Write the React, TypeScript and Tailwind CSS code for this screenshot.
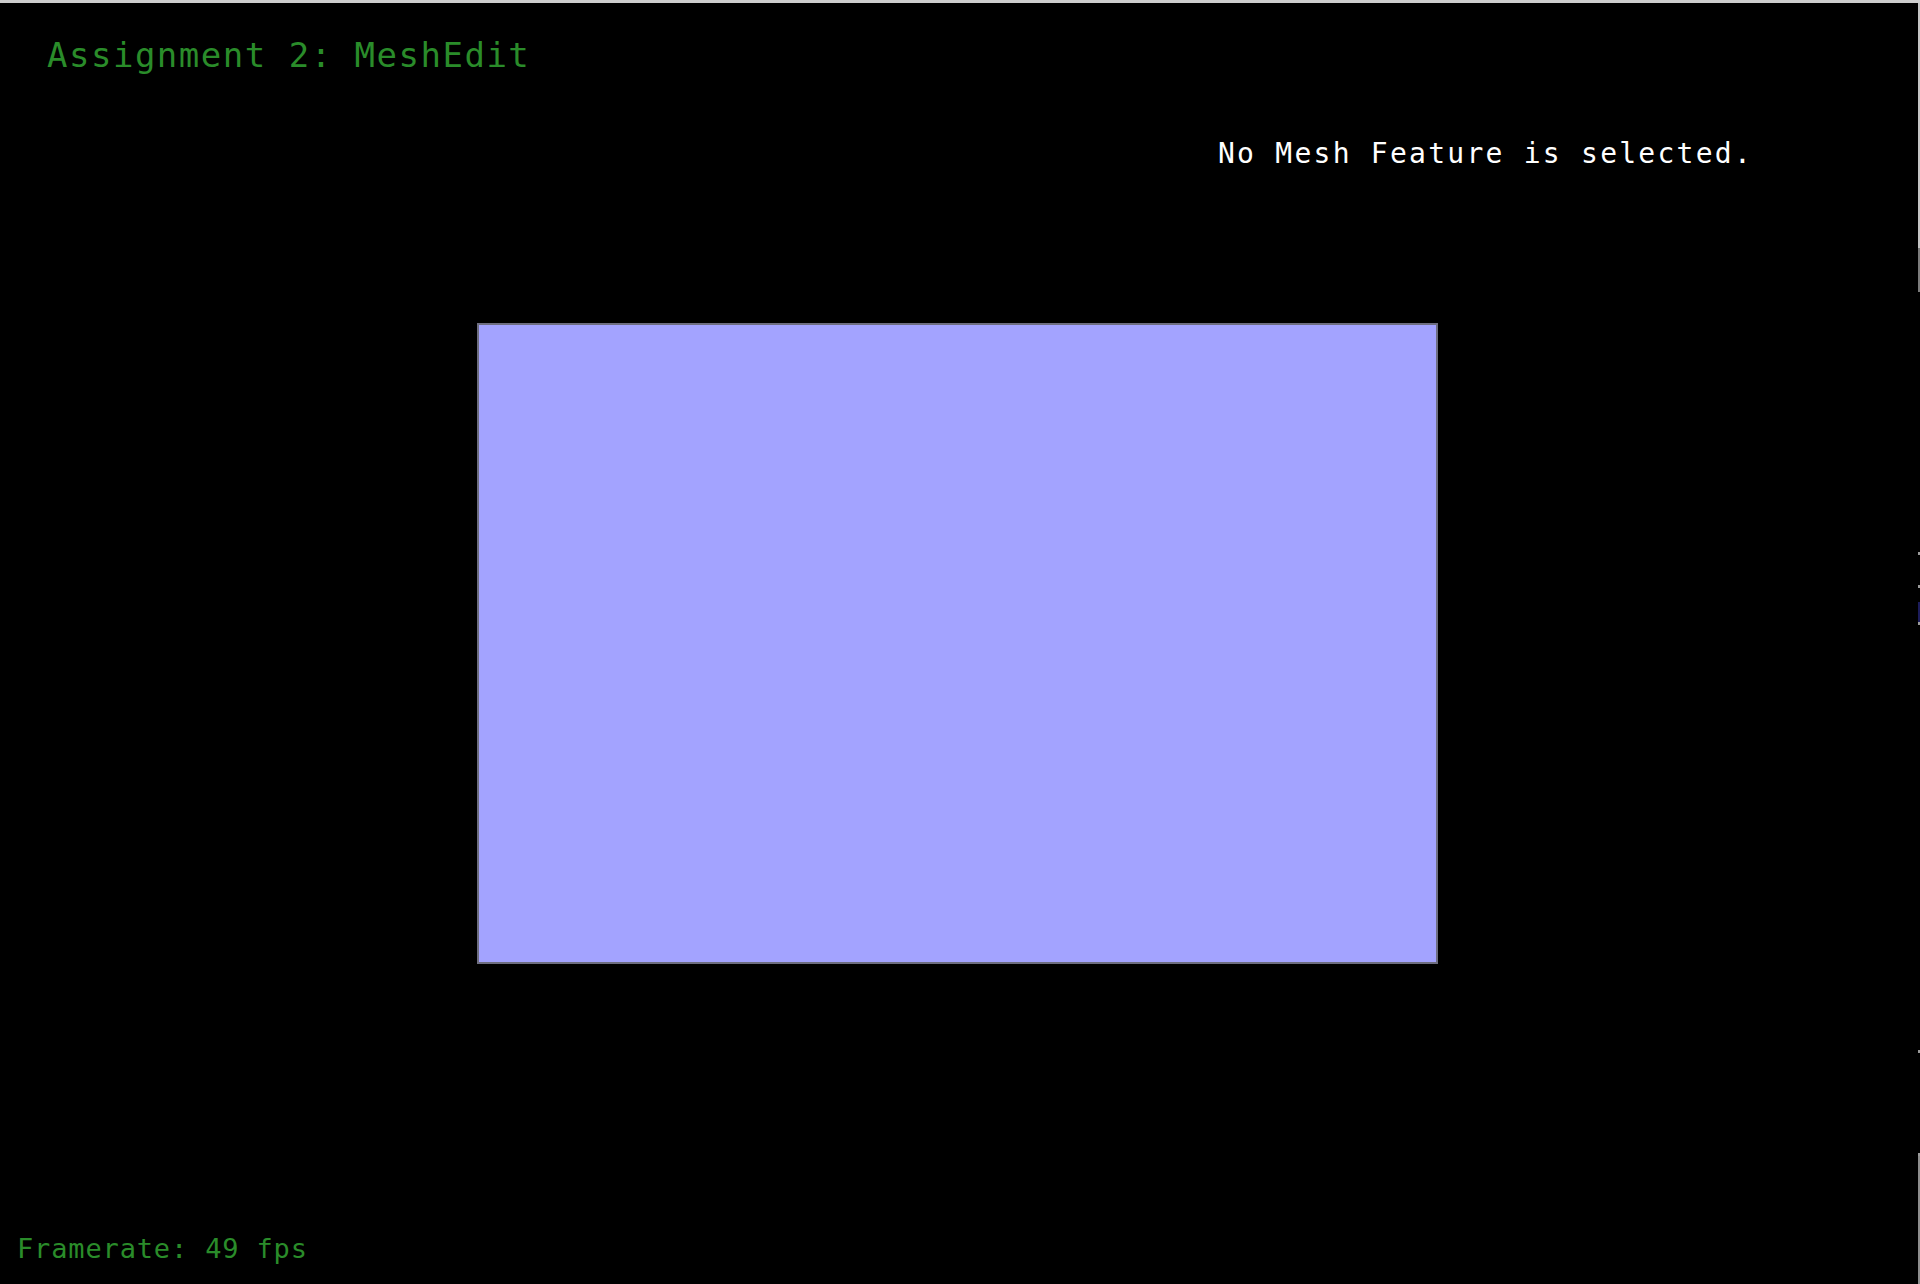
// App.tsx — MeshEdit viewer window

const mono = { fontFamily: '"DejaVu Sans Mono", "Liberation Mono", monospace' };

function EdgeStrip() {
  return (
    <div className="flex w-[2px] flex-col">
      <div className="h-[245px] bg-[#c4c4c4]" />
      <div className="h-[44px] bg-[#7c7c7c]" />
      <div className="h-[260px] bg-black" />
      <div className="h-[3px] bg-[#9a9a9a]" />
      <div className="h-[30px] bg-black" />
      <div className="h-[3px] bg-[#9a9a9a]" />
      <div className="h-[14px] bg-black" />
      <div className="h-[20px] bg-[#1c1c5a]" />
      <div className="h-[3px] bg-[#9a9a9a]" />
      <div className="h-[425px] bg-black" />
      <div className="h-[3px] bg-[#9a9a9a]" />
      <div className="h-[100px] bg-black" />
      <div className="h-[3px] bg-[#9a9a9a]" />
      <div className="flex-1 bg-[#8e8e8e]" />
    </div>
  );
}

export default function App() {
  return (
    <div className="flex h-[1284px] w-[1920px] flex-col overflow-hidden bg-black">
      {/* window frame top */}
      <div className="h-[3px] bg-[#cdcdcd]" />

      <div className="flex flex-1">
        {/* GL viewport */}
        <div className="flex flex-1 flex-col" style={mono}>
          <p className="ml-[47px] mt-[35px] text-[34px] leading-none tracking-[1.5px] text-[#2a8c2a]">
            Assignment 2: MeshEdit
          </p>

          <p className="ml-[1218px] mt-[68px] text-[28px] leading-none tracking-[2.25px] text-white">
            No Mesh Feature is selected.
          </p>

          <div className="ml-[477px] mt-[155px] h-[641px] w-[961px] border-2 border-[#6e6e80] bg-[#a3a3ff]" />

          <p className="ml-[17px] mt-[271px] text-[27px] leading-none tracking-[0.85px] text-[#2a8c2a]">
            Framerate: 49 fps
          </p>
        </div>

        <EdgeStrip />
      </div>
    </div>
  );
}
